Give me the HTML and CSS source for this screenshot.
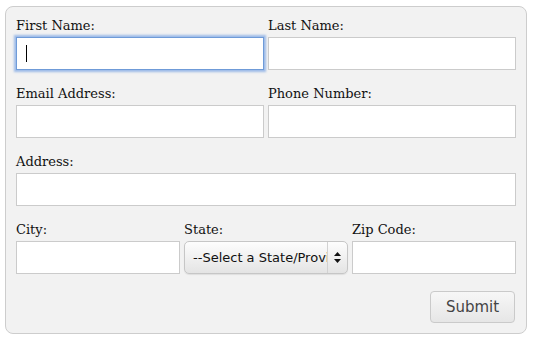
FILE: index.html
```html
<!DOCTYPE html>
<html lang="en">
<head>
    <meta charset="UTF-8">
    <meta name="viewport" content="width=device-width, initial-scale=1.0">
    <title>Contact Form</title>
    <link rel="stylesheet" href="styles.css">
</head>
<body>
    <form class="card" onsubmit="return false">
        <div class="row two">
            <div class="field">
                <label>First Name:</label>
                <div class="input focused"><span class="caret"></span></div>
            </div>
            <div class="field">
                <label>Last Name:</label>
                <input class="input" type="text">
            </div>
        </div>

        <div class="row two">
            <div class="field">
                <label>Email Address:</label>
                <input class="input" type="text">
            </div>
            <div class="field">
                <label>Phone Number:</label>
                <input class="input" type="text">
            </div>
        </div>

        <div class="row">
            <div class="field">
                <label>Address:</label>
                <input class="input" type="text">
            </div>
        </div>

        <div class="row three last">
            <div class="field">
                <label>City:</label>
                <input class="input" type="text">
            </div>
            <div class="field">
                <label>State:</label>
                <div class="select">
                    <span class="select-text">--Select a State/Province--</span>
                    <span class="select-arrows">
                        <svg width="7" height="11" viewBox="0 0 7 11">
                            <path d="M3.5 0 L7 4 L0 4 Z" fill="#111"/>
                            <path d="M0 7 L7 7 L3.5 11 Z" fill="#111"/>
                        </svg>
                    </span>
                </div>
            </div>
            <div class="field">
                <label>Zip Code:</label>
                <input class="input" type="text">
            </div>
        </div>

        <div class="actions">
            <button class="button" type="submit">Submit</button>
        </div>
    </form>
</body>
</html>
```

FILE: styles.css
```css
body {
    margin: 0;
    background-color: #fff;
    font-family: "DejaVu Serif", serif;
}
.card {
    box-sizing: border-box;
    width: 522px;
    margin: 6px 0 0 5px;
    padding: 10px;
    border: 1px solid #cdcdcd;
    border-radius: 8px;
    background: #f2f2f2;
}
.row {
    display: grid;
    gap: 4px;
    margin-bottom: 15px;
}
.row.two {
    grid-template-columns: repeat(2, minmax(0, 1fr));
}
.row.three {
    grid-template-columns: repeat(3, minmax(0, 1fr));
}
.row.last {
    margin-bottom: 0;
}
.field {
    min-width: 0;
}
.field label {
    display: block;
    font-size: 13px;
    line-height: 18px;
    margin-bottom: 2px;
    color: #111;
}
.input {
    box-sizing: border-box;
    display: block;
    width: 100%;
    height: 33px;
    margin: 0;
    border: 1px solid #cbcbcb;
    background: #fff;
    outline: none;
}
.input.focused {
    border-color: #6f9bd8;
    box-shadow: 0 0 2px 2px rgba(100, 150, 225, 0.6);
}
.caret {
    display: block;
    width: 1px;
    height: 17px;
    margin: 7px 0 0 9px;
    background: #000;
}
.select {
    box-sizing: border-box;
    display: flex;
    height: 33px;
    min-width: 0;
    border: 1px solid #c6c6c6;
    border-radius: 5px;
    background: linear-gradient(#fdfdfd, #e4e4e4);
    box-shadow: 0 1px 1px rgba(0, 0, 0, 0.08);
    font-family: "DejaVu Sans", sans-serif;
    font-size: 13px;
    color: #111;
}
.select-text {
    flex: 1;
    min-width: 0;
    overflow: hidden;
    white-space: nowrap;
    padding-left: 8px;
    line-height: 31px;
}
.select-arrows {
    flex: none;
    width: 19px;
    border-left: 1px solid #d2d2d2;
    display: flex;
    align-items: center;
    justify-content: center;
}
.actions {
    display: flex;
    justify-content: flex-end;
    margin-top: 17px;
    padding-right: 1px;
}
.button {
    box-sizing: border-box;
    width: 85px;
    height: 32px;
    border: 1px solid #cacaca;
    border-radius: 4px;
    background: linear-gradient(#f7f7f7, #e6e6e6);
    font-family: "DejaVu Sans", sans-serif;
    font-size: 15px;
    color: #444;
    cursor: pointer;
}
```
